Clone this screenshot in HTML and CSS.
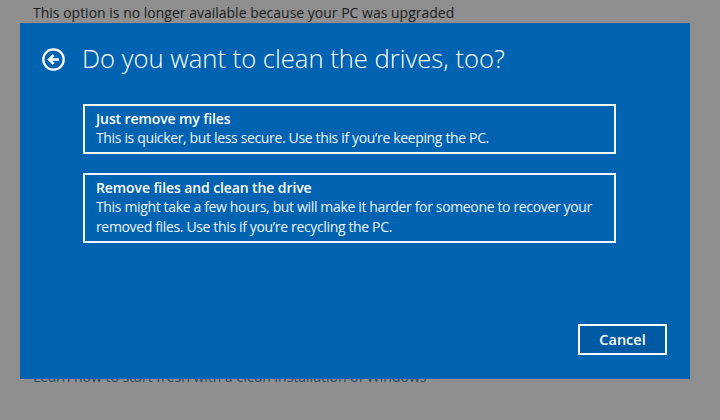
FILE: index.html
```html
<!DOCTYPE html>
<html lang="en">
<head>
    <meta charset="UTF-8">
    <meta name="viewport" content="width=device-width, initial-scale=1.0">
    <title>Reset this PC</title>
    <link rel="stylesheet" href="styles.css">
</head>
<body>
    <div class="page">
        <p class="notice">This option is no longer available because your PC was upgraded</p>
        <a class="fresh-link" href="#">Learn how to start fresh with a clean installation of Windows</a>
    </div>

    <!-- Reset dialog over the settings page -->
    <div class="dialog">
        <div class="dialog-header">
            <button class="back-btn" aria-label="Back">
                <svg width="23" height="23" viewBox="0 0 23 23">
                    <circle cx="11.5" cy="11.5" r="10.2" fill="none" stroke="#fff" stroke-width="2.3"/>
                    <path d="M17 11.5H7.5M11.6 7.1L7.2 11.5L11.6 15.9" fill="none" stroke="#fff" stroke-width="2.7"/>
                </svg>
            </button>
            <h1>Do you want to clean the drives, too?</h1>
        </div>

        <div class="options">
            <div class="option">
                <div class="option-title">Just remove my files</div>
                <div class="option-desc">This is quicker, but less secure. Use this if you’re keeping the PC.</div>
            </div>
            <div class="option">
                <div class="option-title">Remove files and clean the drive</div>
                <div class="option-desc">This might take a few hours, but will make it harder for someone to recover your removed files. Use this if you’re recycling the PC.</div>
            </div>
        </div>

        <div class="dialog-footer">
            <button class="cancel-btn">Cancel</button>
        </div>
    </div>
</body>
</html>
```

FILE: styles.css
```css
/* Page behind the dialog */
body {
    margin: 0;
    background-color: #8f8f8f;
    font-family: "Open Sans", "Noto Sans", sans-serif;
}
.page {
    padding: 3px 33px;
}
.notice {
    margin: 0;
    font-size: 14px;
    line-height: 20px;
    color: #1c1c1c;
}
.fresh-link {
    display: block;
    margin-top: 344px;
    font-size: 14px;
    line-height: 20px;
    color: #34466a;
    text-decoration: none;
}

/* Dialog styles */
.dialog {
    position: absolute;
    left: 20px;
    top: 23px;
    width: 670px;
    height: 356px;
    box-sizing: border-box;
    padding: 18px 23px 24px 22px;
    background-color: #0063b1;
    color: #fff;
    display: flex;
    flex-direction: column;
}
.dialog-header {
    display: flex;
    align-items: center;
    gap: 17px;
    height: 36px;
}
.back-btn {
    padding: 0;
    border: none;
    background: none;
    width: 23px;
    height: 23px;
    cursor: pointer;
}
.back-btn svg {
    display: block;
}
.dialog-header h1 {
    margin: 0;
    font-size: 25.6px;
    font-weight: 300;
    line-height: 36px;
    white-space: nowrap;
}
.options {
    display: flex;
    flex-direction: column;
    gap: 19px;
    margin: 27px 0 0 41px;
    width: 533px;
}
.option {
    border: 2px solid #f2f6fa;
    padding: 3px 11px 4px;
    cursor: pointer;
}
.option-title {
    font-size: 14px;
    font-weight: 600;
    line-height: 19px;
    letter-spacing: -0.1px;
}
.option-desc {
    font-size: 14px;
    line-height: 20px;
    letter-spacing: -0.35px;
    color: #eef4fa;
}
.dialog-footer {
    margin-top: auto;
    display: flex;
    justify-content: flex-end;
}
.cancel-btn {
    width: 89px;
    height: 31px;
    border: 2px solid #fff;
    background-color: #005aa3;
    color: #fff;
    font-family: inherit;
    font-size: 14.5px;
    font-weight: 600;
    cursor: pointer;
}
```
